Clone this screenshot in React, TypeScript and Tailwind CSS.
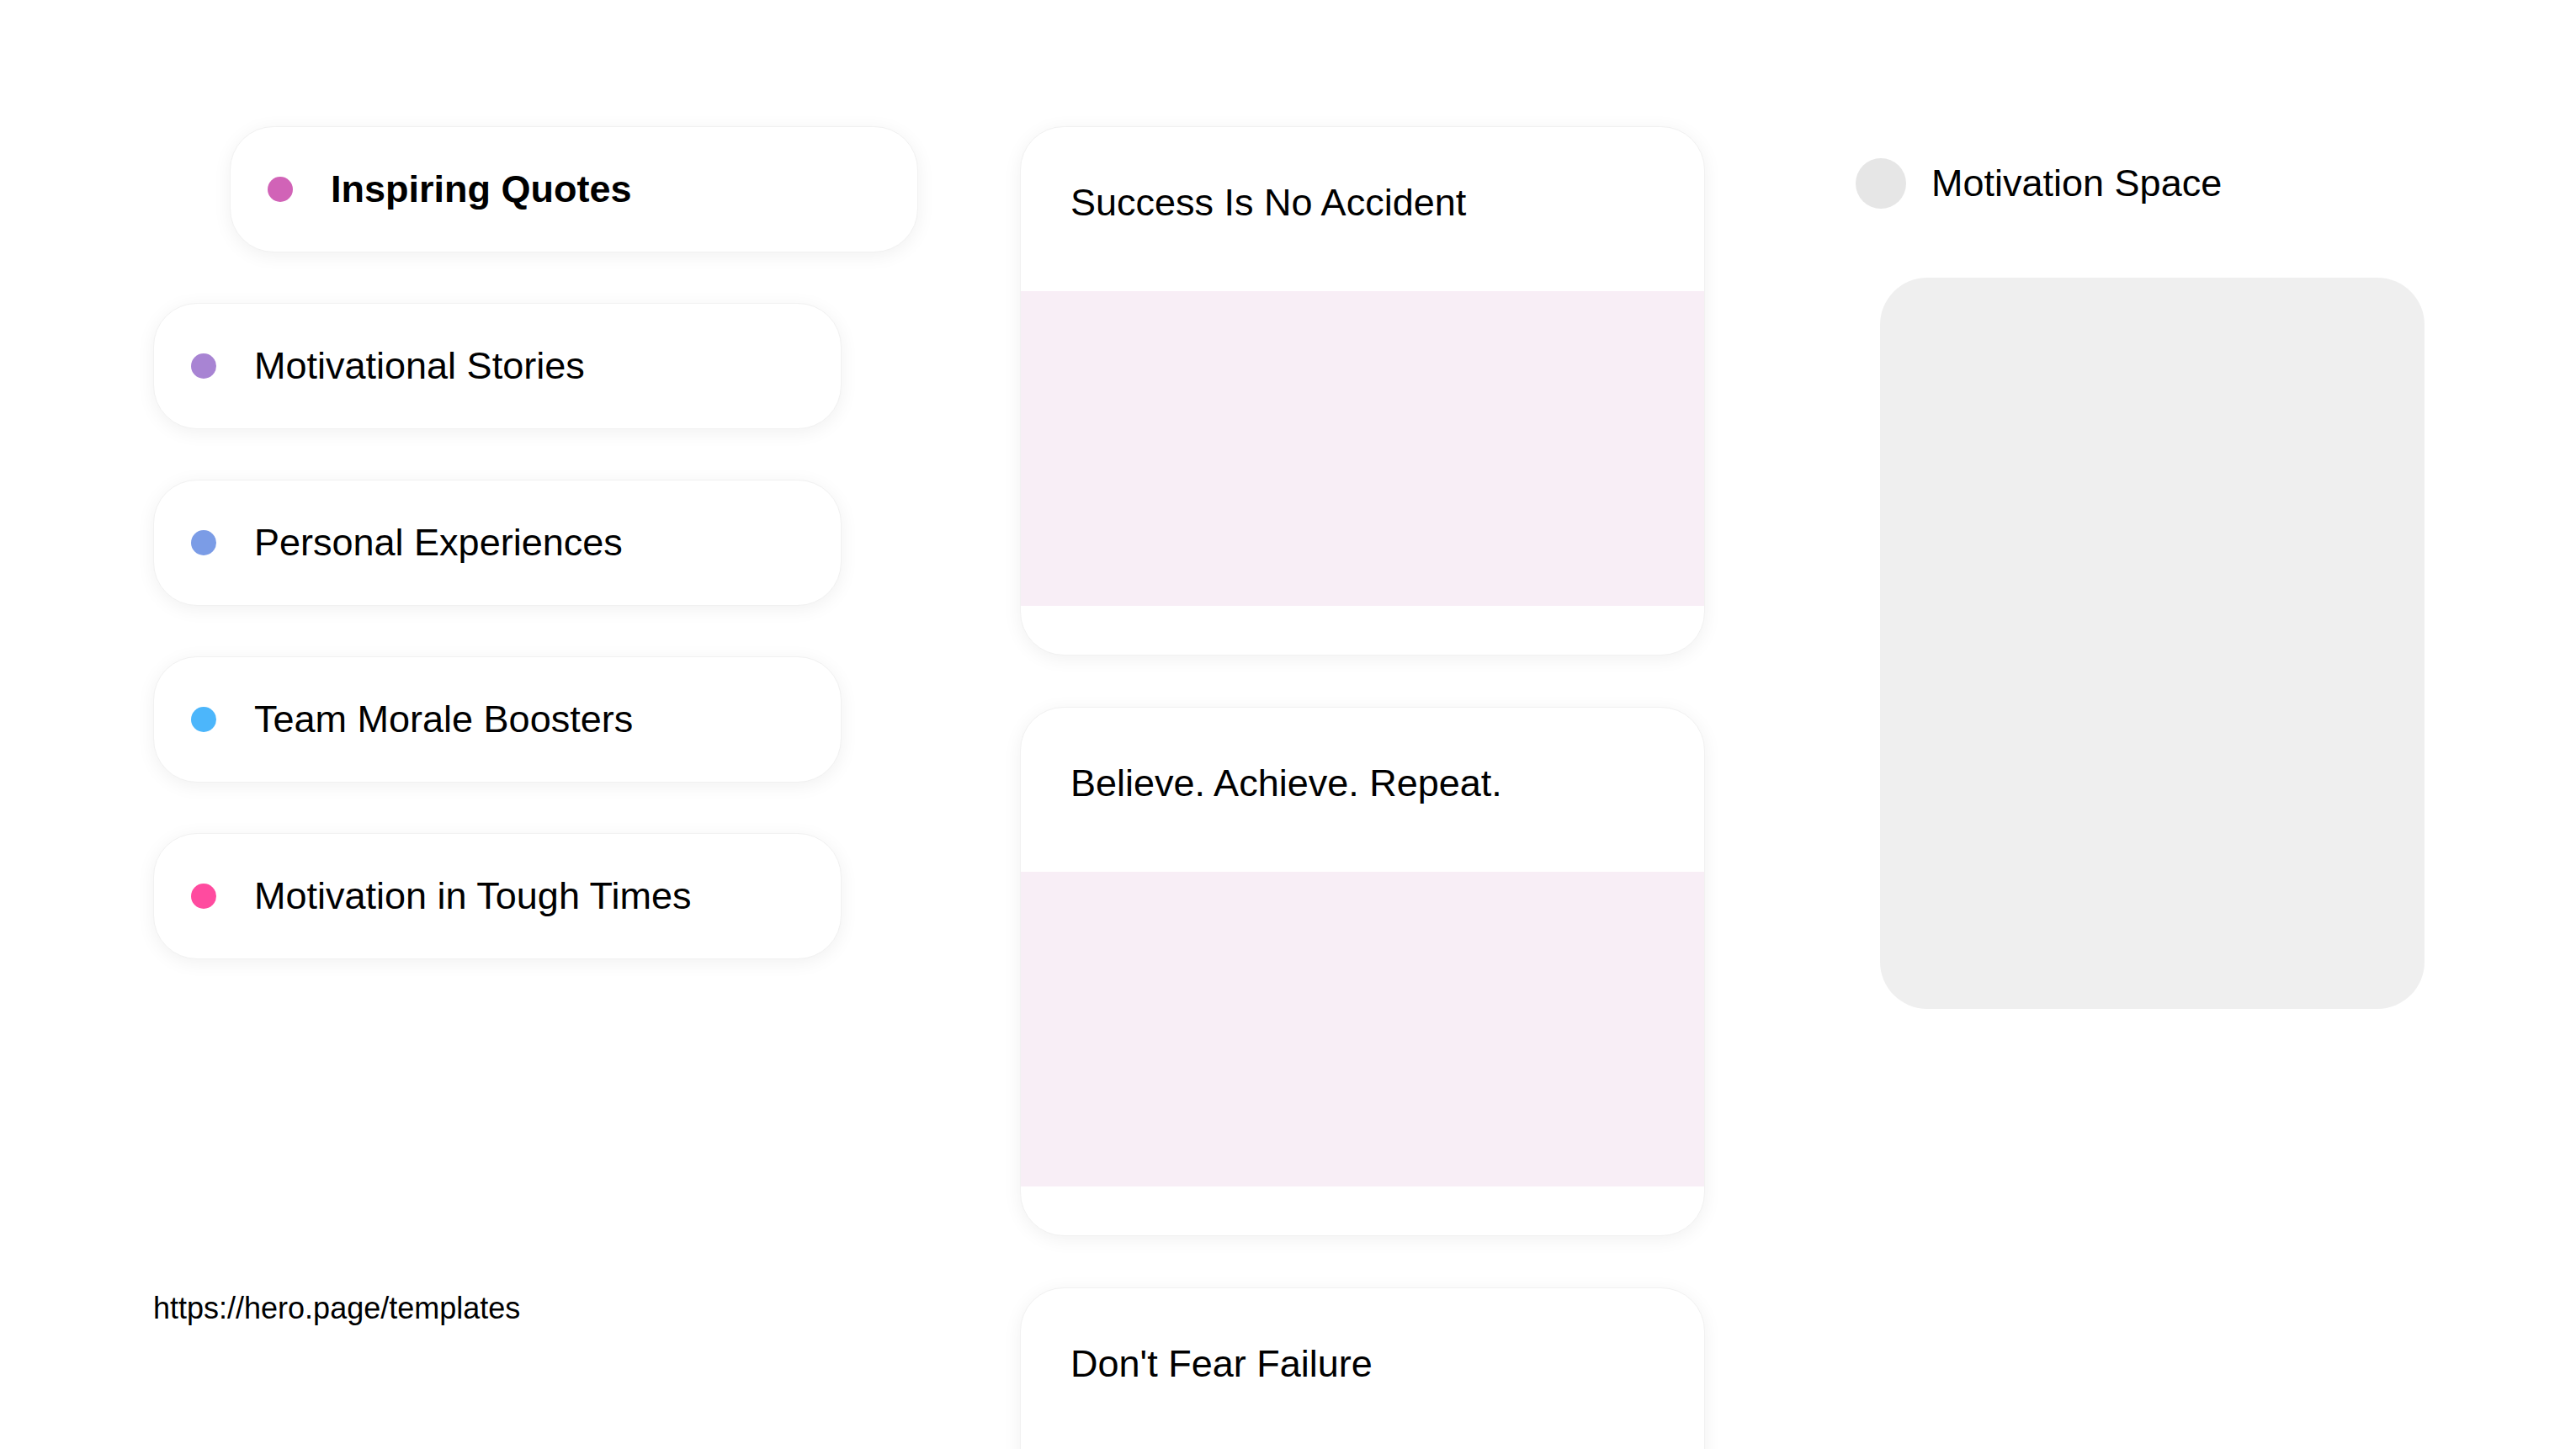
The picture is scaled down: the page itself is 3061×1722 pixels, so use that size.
import React from 'react';

interface Topic {
  label: string;
  dot: string;
  active?: boolean;
}

const topics: Topic[] = [
  { label: 'Inspiring Quotes', dot: 'bg-[#d163b7]', active: true },
  { label: 'Motivational Stories', dot: 'bg-[#a884d3]' },
  { label: 'Personal Experiences', dot: 'bg-[#7b9ce6]' },
  { label: 'Team Morale Boosters', dot: 'bg-[#4cb6fb]' },
  { label: 'Motivation in Tough Times', dot: 'bg-[#ff4b9f]' },
];

const quotes = ['Success Is No Accident', 'Believe. Achieve. Repeat.', "Don't Fear Failure"];

function TopicPill({ label, dot, active }: Topic) {
  return (
    <div
      className={`flex h-[150px] w-[818px] shrink-0 items-center gap-[45px] rounded-[52px] border border-[#f1f1f1] bg-white pl-[44px] shadow-[0_4px_22px_rgba(0,0,0,0.06)] ${
        active ? 'translate-x-[91px]' : ''
      }`}
    >
      <span className={`h-[30px] w-[30px] shrink-0 rounded-full ${dot}`} />
      <span className={`text-[45px] leading-[1.15] text-black ${active ? 'font-bold' : 'font-normal'}`}>{label}</span>
    </div>
  );
}

function QuoteCard({ title }: { title: string }) {
  return (
    <div className="flex h-[629px] w-[814px] shrink-0 flex-col overflow-hidden rounded-[52px] border border-[#f1f1f1] bg-white shadow-[0_4px_22px_rgba(0,0,0,0.06)]">
      <div className="h-[195px] shrink-0 pl-[59px] pt-[64px]">
        <h2 className="text-[45px] font-normal leading-[1.15] text-black">{title}</h2>
      </div>
      {/* image placeholder */}
      <div className="h-[374px] shrink-0 bg-[#f8eef6]" />
      <div className="flex-1" />
    </div>
  );
}

export default function App() {
  return (
    <div
      className="h-[1722px] w-[3061px] overflow-hidden bg-white"
      style={{ fontFamily: '"Liberation Sans", Arial, sans-serif' }}
    >
      <div className="flex items-start pl-[182px] pt-[150px]">
        {/* Topics */}
        <div className="flex w-[818px] shrink-0 flex-col">
          <div className="flex flex-col gap-[60px]">
            {topics.map((t) => (
              <TopicPill key={t.label} {...t} />
            ))}
          </div>
          <p className="mt-[394px] text-[36px] leading-[1.15] text-black">https://hero.page/templates</p>
        </div>

        {/* Quotes */}
        <div className="ml-[212px] flex shrink-0 flex-col gap-[61px]">
          {quotes.map((q) => (
            <QuoteCard key={q} title={q} />
          ))}
        </div>

        {/* Space */}
        <div className="ml-[179px] flex shrink-0 flex-col">
          <div className="mt-[38px] flex h-[60px] items-center gap-[30px]">
            <span className="h-[60px] w-[60px] rounded-full bg-[#e6e6e6]" />
            <span className="text-[45px] leading-[1.15] text-black">Motivation Space</span>
          </div>
          <div className="ml-[29px] mt-[82px] h-[869px] w-[647px] rounded-[56px] bg-[#efefef]" />
        </div>
      </div>
    </div>
  );
}
